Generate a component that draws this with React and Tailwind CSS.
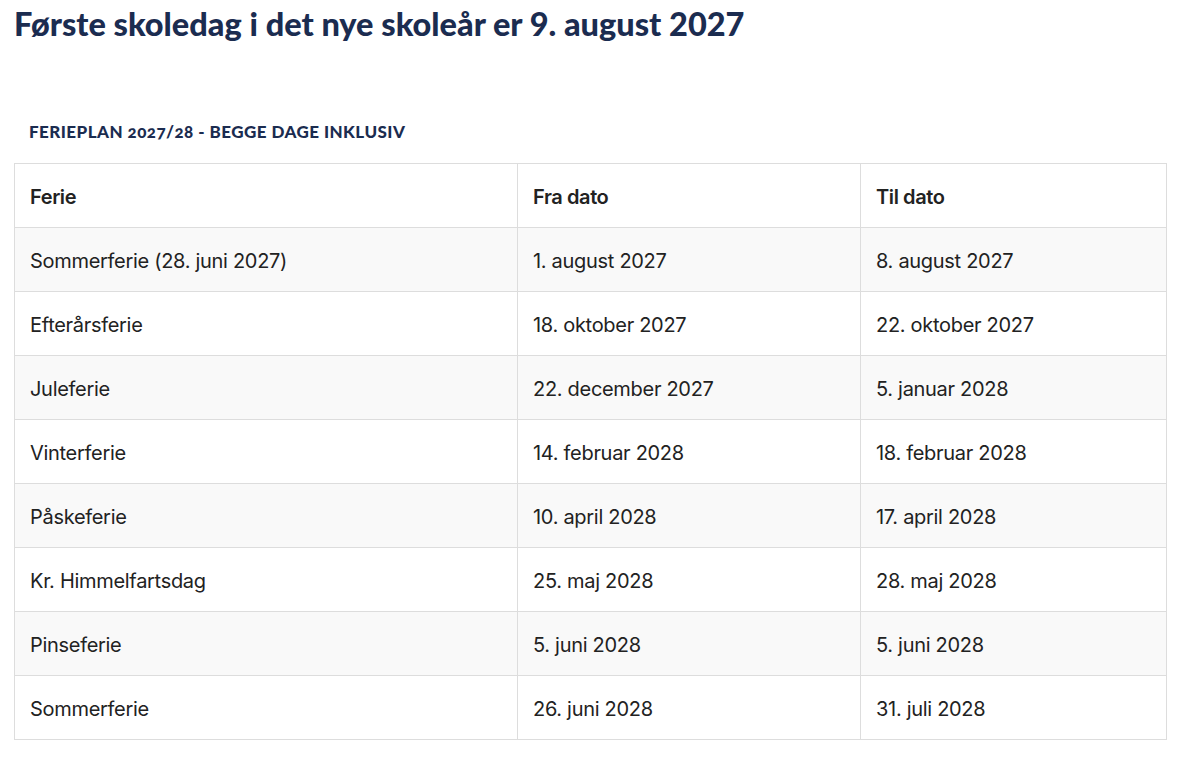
const rows = [
  ['Sommerferie (28. juni 2027)', '1. august 2027', '8. august 2027'],
  ['Efterårsferie', '18. oktober 2027', '22. oktober 2027'],
  ['Juleferie', '22. december 2027', '5. januar 2028'],
  ['Vinterferie', '14. februar 2028', '18. februar 2028'],
  ['Påskeferie', '10. april 2028', '17. april 2028'],
  ['Kr. Himmelfartsdag', '25. maj 2028', '28. maj 2028'],
  ['Pinseferie', '5. juni 2028', '5. juni 2028'],
  ['Sommerferie', '26. juni 2028', '31. juli 2028'],
]

export default function App() {
  return (
    <div className="min-h-screen bg-white px-[14px] pt-[2px] font-['Lato',sans-serif]">
      <h1 className="text-[32.5px] font-black leading-[44px] text-[#1b2c50]">
        Første skoledag i det nye skoleår er 9. august 2027
      </h1>

      <h2 className="mt-[74px] pl-[15px] text-[17px] font-black leading-[24px] tracking-[0.45px] text-[#1b2c50]">
        FERIEPLAN <span className="oldstyle-nums">2027/28</span> - BEGGE DAGE INKLUSIV
      </h2>

      <table className="mt-[19px] w-[1152px] table-fixed border-collapse font-['Inter',sans-serif] text-[20px] text-[#222222]">
        <colgroup>
          <col className="w-[503px]" />
          <col className="w-[343px]" />
          <col className="w-[306px]" />
        </colgroup>
        <thead>
          <tr className="h-[64px] bg-white">
            <th className="border border-[#dddddd] px-[15px] pt-[3px] text-left font-semibold tracking-[-0.4px]">Ferie</th>
            <th className="border border-[#dddddd] px-[15px] pt-[3px] text-left font-semibold tracking-[-0.4px]">Fra dato</th>
            <th className="border border-[#dddddd] px-[15px] pt-[3px] text-left font-semibold tracking-[-0.4px]">Til dato</th>
          </tr>
        </thead>
        <tbody>
          {rows.map((r, i) => (
            <tr key={i} className={`h-[64px] ${i % 2 === 0 ? 'bg-[#f9f9f9]' : 'bg-white'}`}>
              {r.map((c, j) => (
                <td key={j} className="border border-[#dddddd] px-[15px] pt-[3px] tracking-[-0.3px]">{c}</td>
              ))}
            </tr>
          ))}
        </tbody>
      </table>
    </div>
  )
}
